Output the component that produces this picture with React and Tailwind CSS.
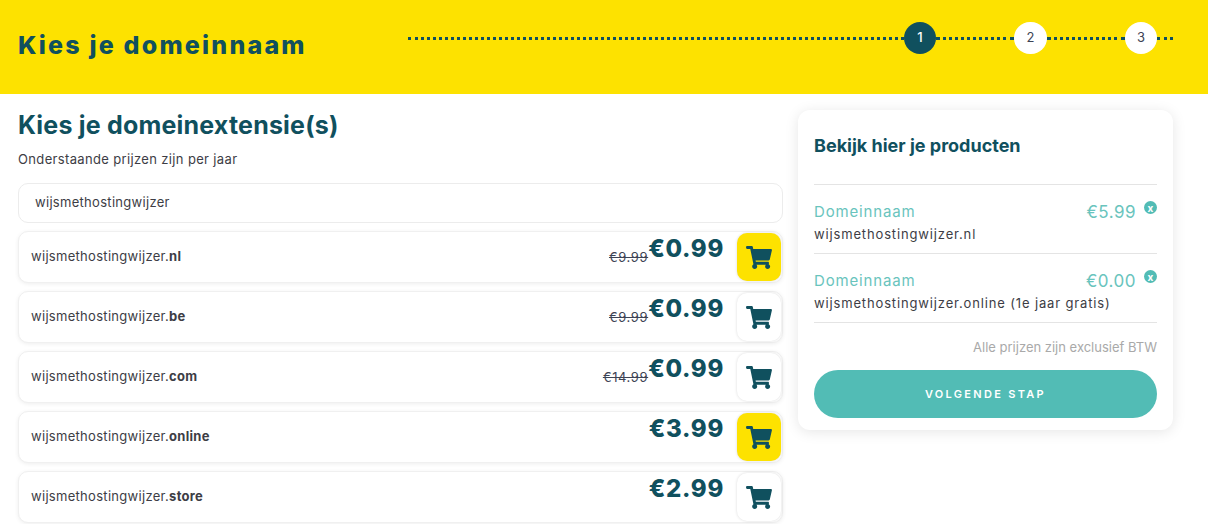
import React from 'react';
import { FaShoppingCart } from 'react-icons/fa';

const rows = [
  { ext: 'nl', old: '€9.99', price: '€0.99', active: true },
  { ext: 'be', old: '€9.99', price: '€0.99' },
  { ext: 'com', old: '€14.99', price: '€0.99' },
  { ext: 'online', price: '€3.99', active: true },
  { ext: 'store', price: '€2.99' },
];

const Step = ({ n, active, className = '' }) => (
  <div className={`flex h-8 items-center justify-center rounded-full text-[13px] ${active ? 'bg-[#10505e] text-white font-medium' : 'bg-white text-[#3d4354]'} ${className}`}>
    {n}
  </div>
);

const Dots = ({ className = '' }) => (
  <div className={`border-t-[3px] border-dotted border-[#10505e] ${className}`} />
);

const DomainRow = ({ ext, old, price, active }) => (
  <div className="flex h-[52px] items-center rounded-[10px] border border-[#f0f0f0] bg-white pl-3 pr-[1px] shadow-[0_1px_4px_rgba(0,0,0,0.07)]">
    <div className="flex-1 text-[13px] tracking-[0.3px] text-[#3d3d45]">
      wijsmethostingwijzer.<b className="font-bold">{ext}</b>
    </div>
    <div className="mr-[13px] flex items-start self-start pt-[1px]">
      {old && <s className="mt-[16px] text-[13px] leading-4 tracking-[0.6px] text-[#3d4354]">{old}</s>}
      <span className="text-[24px] font-extrabold leading-8 tracking-[0.7px] text-[#10505e]">{price}</span>
    </div>
    <button className={`flex h-12 w-11 items-center justify-center rounded-[10px] shadow-[0_0_3px_rgba(0,0,0,0.15)] ${active ? 'bg-[#fde200]' : 'bg-white'}`}>
      <FaShoppingCart className="h-[23px] w-[26px] text-[#10505e]" />
    </button>
  </div>
);

const CartItem = ({ price, name }) => (
  <div className="border-b border-[#e4e4e4] pt-[15px] pb-[9px]">
    <div className="flex items-start justify-between">
      <span className="mt-[2px] text-[15px] leading-5 tracking-[0.85px] text-[#69c4bd]">Domeinnaam</span>
      <div className="flex items-start">
        <span className="text-[17px] leading-6 tracking-[0.5px] text-[#69c4bd]">{price}</span>
        <span className="ml-2 mt-[1px] flex h-[13px] w-[13px] items-center justify-center rounded-full bg-[#52bcb5] text-[10px] font-bold leading-none text-white">x</span>
      </div>
    </div>
    <div className="text-[13px] leading-5 tracking-[0.85px] text-[#3d3d45]">{name}</div>
  </div>
);

export default function App() {
  return (
    <div className="h-[524px] overflow-hidden bg-white font-['Inter',sans-serif]">
      <header className="flex h-[94px] bg-[#fde200] pl-[18px]">
        <h1 className="mt-[29px] w-[390px] text-[25px] font-extrabold leading-8 tracking-[2.2px] text-[#10505e]">Kies je domeinnaam</h1>
        <div className="mt-[22px] flex h-8 w-[765px] items-center">
          <Dots className="w-[496px]" />
          <Step n="1" active className="w-8" />
          <Dots className="w-[78px]" />
          <Step n="2" className="w-[33px]" />
          <Dots className="w-[78px]" />
          <Step n="3" className="w-8" />
          <Dots className="w-4" />
        </div>
      </header>

      <main className="flex items-start gap-[15px] pl-[18px]">
        <section className="w-[765px]">
          <h2 className="mt-[15px] text-[25px] font-bold leading-8 tracking-[0.2px] text-[#10505e]">Kies je domeinextensie(s)</h2>
          <p className="mt-2 text-[13px] leading-5 tracking-[0.35px] text-[#3d3d45]">Onderstaande prijzen zijn per jaar</p>
          <div className="mt-[14px] flex h-10 items-center rounded-[10px] border border-[#ececec] bg-white pl-4 text-[13px] tracking-[0.3px] text-[#3d3d45]">
            wijsmethostingwijzer
          </div>
          <div className="mt-2 flex flex-col gap-2">
            {rows.map((r) => <DomainRow key={r.ext} {...r} />)}
          </div>
        </section>

        <aside className="mt-4 h-[320px] w-[375px] rounded-[12px] bg-white px-4 shadow-[0_2px_14px_rgba(0,0,0,0.1)]">
          <h3 className="mt-[23px] pt-[1px] text-[18px] font-bold leading-6 text-[#10505e]">Bekijk hier je producten</h3>
          <div className="mt-[26px] border-t border-[#e4e4e4]">
            <CartItem price="€5.99" name="wijsmethostingwijzer.nl" />
            <CartItem price="€0.00" name="wijsmethostingwijzer.online (1e jaar gratis)" />
          </div>
          <p className="mt-[14px] text-right text-[13px] leading-5 text-[#a9a9a9]">Alle prijzen zijn exclusief BTW</p>
          <button className="mt-[13px] h-12 w-full rounded-full bg-[#52bcb5] text-[11px] font-semibold tracking-[2.3px] text-white">VOLGENDE STAP</button>
        </aside>
      </main>
    </div>
  );
}
